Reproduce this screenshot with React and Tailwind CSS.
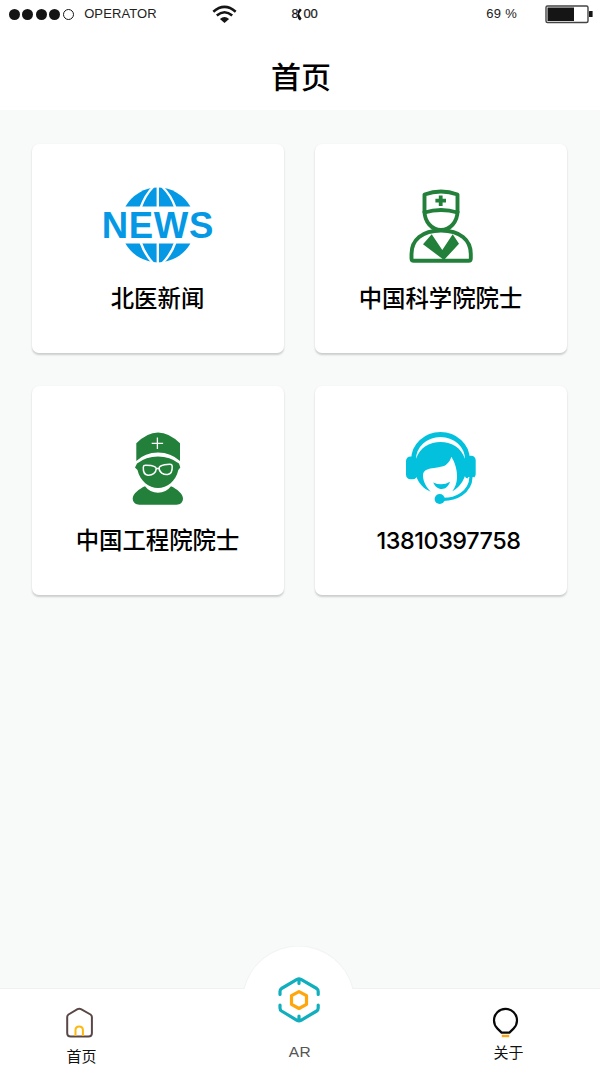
import React from 'react';

const NewsIcon = () => (
  <svg viewBox="98 184 120 80" className="w-[120px] h-20">
    <path d="M125.4 206.5A37.4 37.4 0 0 1 190.4 206.5Z" fill="#0599e5" />
    <path d="M125.4 243.5A37.4 37.4 0 0 0 190.4 243.5Z" fill="#0599e5" />
    <g fill="none" stroke="#fff" strokeWidth="2.4">
      <path d="M157.8 186V208M157.8 242V264" />
      <path d="M153.5 186.5Q145 195 140.5 208M162 186.5Q171 195 175.5 208" />
      <path d="M153.5 263.5Q145 255 140.5 242M162 263.5Q171 255 175.5 242" />
    </g>
    <text
      x="101.8"
      y="238"
      textLength="111.5"
      fontSize="36.5"
      fontWeight="700"
      fill="#0599e5"
      className="font-['Liberation_Sans',sans-serif]"
    >
      NEWS
    </text>
  </svg>
);

const ScientistIcon = () => (
  <svg viewBox="381 184 120 80" className="w-[120px] h-20" fill="none" stroke="#22803a" strokeWidth="3.9" strokeLinejoin="round">
    <path d="M424.5 212.5V194.5Q441 188.5 457.5 194.5V212.5Q441 207.5 424.5 212.5Z" />
    <path d="M424.5 211C424.5 222 432 230 441 230S457.5 222 457.5 211" />
    <path d="M441 230.5C422 230.5 411.5 240 411.5 254V258.5Q411.5 260.8 413.8 260.8H468.5Q470.8 260.8 470.8 258.5V254C470.8 240 460 230.5 441 230.5Z" />
    <path d="M431.7 234.3L423 244.3L444 260L459 243.7L452.7 234.3L442.3 250Z" fill="#22803a" stroke="none" />
    <path d="M440.7 195.5V206M435.4 200.7H446" strokeWidth="3.8" />
  </svg>
);

const EngineerIcon = () => (
  <svg viewBox="98 426 120 80" className="w-[120px] h-20" fill="#22803a">
    <path d="M136.3 443.3Q147 432.4 158 432.4T180 443.3V461Q171 452.4 158 452.4T136.3 461Z" />
    <path d="M137 463.5Q146 456.5 158 456.5T179 463.5L180.3 467.5L178.3 470C176 481 167 488 158 488S140 481 137.5 470L135 467.5Z" />
    <path d="M145 486.3Q150 492.8 158 492.8T171 486.3C177 489 183 494 183 498.5C183 502 180.5 504.7 176.5 504.7H139.5C135.5 504.7 132.7 502 132.7 498.5C132.7 494 139 489 145 486.3Z" />
    <g fill="none" stroke="#fff" strokeWidth="1.5">
      <path d="M157.4 437.6V449M151.7 443.4H163.1" strokeWidth="1.3" />
      <path d="M143.3 467Q143.5 465 146 465.2L151 465.5Q156 466.5 156.2 468.5C156.3 473 152 475.5 148 475.2C144.5 475 143 473 143.3 467Z" />
      <path d="M172.2 466Q172 464 169.5 464.2L164.5 464.7Q159.3 465.8 159.1 468C159 472.5 163.5 474.8 167.5 474.5C171 474.2 172.5 472 172.2 466ZM156 468.8L159.3 468.2" />
    </g>
  </svg>
);

const SupportIcon = () => (
  <svg viewBox="381 426 120 80" className="w-[120px] h-20" fill="#03c1dd">
    <path d="M413.6 461V459.5A26.9 25 0 0 1 467.4 459.5V461" fill="none" stroke="#03c1dd" strokeWidth="4.8" />
    <rect x="406" y="456.5" width="11.3" height="22.8" rx="4.5" />
    <rect x="464.2" y="455.7" width="11.5" height="22.8" rx="4.5" />
    <path d="M416 459C420 447 430 442 440.5 442S461 447 465 459V476C462 484 457 489 452.3 491.3C455 488 456.8 483 457 478C457.5 471 455 462 451.3 456.7C450.5 460 447.5 465 443 466.3C437 468 431 467.8 426.7 469.7C423.5 471.2 423 473.5 423 476C423.3 482 426.5 487.5 430.7 491.7C424 489 419 484 416 476Z" />
    <path d="M433.3 482.5Q442 486.5 450 481.8C448.5 486.5 445.5 489 441.7 489C438 489 435 486.7 433.3 482.5Z" />
    {/* Microphone boom */}
    <path d="M440 499.2C456 500.5 470.5 492 471 477" fill="none" stroke="#fff" strokeWidth="6" />
    <path d="M440 499.2C456 500.5 470.5 492 471 477" fill="none" stroke="#03c1dd" strokeWidth="3.2" />
    <circle cx="439.7" cy="499" r="5.1" />
  </svg>
);

const cards = [
  { label: '北医新闻', icon: NewsIcon },
  { label: '中国科学院院士', icon: ScientistIcon },
  { label: '中国工程院院士', icon: EngineerIcon },
  { label: '13810397758', icon: SupportIcon, phone: true }
];

const StatusBar = () => (
  <div className="flex h-7 items-center pl-[9px] pr-[7px] font-['Liberation_Sans',sans-serif] text-[13px] text-[#222]">
    <div className="flex gap-[2.4px]">
      {[0, 1, 2, 3].map(i => (
        <span key={i} className="size-[11px] rounded-full bg-[#151515]" />
      ))}
      <span className="size-[11px] rounded-full border border-[#151515]" />
    </div>
    <span className="ml-[10.6px] w-[72px] tracking-[0.1px] whitespace-nowrap">OPERATOR</span>
    <svg viewBox="212 4 25 19" className="ml-[55.4px] h-[19px] w-[25px]" fill="none" stroke="#151515" strokeWidth="2.6">
      <path d="M213.3 10.7Q224.5 1.1 235.7 10.7M216.8 14.5Q224.5 8 232.2 14.5" />
      <path d="M219.9 18Q224.5 14 229.1 18L224.5 22Z" fill="#151515" stroke="none" />
    </svg>
    <div className="ml-[55px] flex items-center text-[#151515]">
      <span className="text-[12.5px] [-webkit-text-stroke:0.2px_#151515]">8</span>
      <svg viewBox="0 0 5 14" className="-ml-[2px] h-[14px] w-[5px]" fill="#151515">
        <path d="M1 4L2.8 1.5L4.8 3L3.3 5L2 7L3.3 9.5L4.6 11.5L3 13.5L1.2 12L.8 9Z" />
      </svg>
      <span className="ml-[2px] text-[13px] tracking-[-0.2px] [-webkit-text-stroke:0.2px_#151515]">00</span>
    </div>
    <span className="ml-auto mr-[28px] text-[13px] tracking-[0.3px]">69 %</span>
    <svg viewBox="545 4 48 20" className="h-5 w-12">
      <rect x="546" y="6" width="42" height="16.5" rx="1.5" fill="#fff" stroke="#444" strokeWidth="1.4" />
      <rect x="547.5" y="7.5" width="26.5" height="13.5" fill="#151515" />
      <rect x="589" y="11" width="3.6" height="6" rx=".5" fill="#151515" />
    </svg>
  </div>
);

const TabBar = () => (
  <nav className="relative h-[79px] border-t border-[#f0f2f2] bg-white text-[15px] leading-5 text-[#111]">
    {/* Raised dome behind the AR tab */}
    <svg viewBox="240 945 118 60" className="absolute left-[240px] -top-[43px] h-[60px] w-[118px]">
      <path d="M244 989A56 56 0 0 1 353 989V1004H244Z" fill="#fff" />
      <path d="M244 988A56 56 0 0 1 353 988" fill="none" stroke="#f2f4f4" />
    </svg>

    <div className="relative grid grid-cols-[163px_272px_1fr]">
      <a className="flex flex-col items-center">
        <svg viewBox="64 1004 30 36" className="mt-[15px] mr-[5px] h-9 w-[30px]" fill="none" strokeWidth="2" strokeLinejoin="round">
          <path d="M67.2 1017Q67.2 1015.5 68.5 1014.5L77.5 1009.2Q79.3 1008.2 81 1009.2L90.5 1014.5Q91.9 1015.5 91.9 1017V1033Q91.9 1036.5 88.4 1036.5H70.7Q67.2 1036.5 67.2 1033Z" stroke="#594745" />
          <path d="M75.5 1036V1030Q75.5 1026.4 79.2 1026.4T82.9 1030V1036" stroke="#fcb813" />
        </svg>
        <span className="mt-[6px]">首页</span>
      </a>

      <a className="flex flex-col items-center">
        <svg viewBox="276 974 46 52" className="-mt-[15px] h-[52px] w-[46px]" fill="none" strokeWidth="3.2" strokeLinecap="round" strokeLinejoin="round">
          <g stroke="#11afbd">
            <path d="M280 994.5V991.5Q280 989.5 281.5 988.5L297 979.3Q299 978.2 301 979.3L316.7 988.5Q318.2 989.5 318.2 991.5V994.5M299 979.5V983.5" />
            <path d="M280 1005V1008Q280 1010 281.5 1011L297 1020.3Q299 1021.4 301 1020.3L316.7 1011Q318.2 1010 318.2 1008V1005M299 1020V1016" />
          </g>
          <path d="M299 991.7L306.5 995.7V1004.3L299 1008.5L291.5 1004.3V995.7Z" stroke="#ffa60c" />
        </svg>
        <span className="mt-[16px] pl-[2px] font-['Liberation_Sans',sans-serif] text-[15.5px] leading-5 tracking-[0.6px] text-[#555]">AR</span>
      </a>

      <a className="flex flex-col items-center pr-[18px]">
        <svg viewBox="490 1004 32 34" className="mt-[15px] mr-[5px] h-[34px] w-8" fill="none">
          <path d="M501.6 1032.6L497.5 1028.6A11.5 11.5 0 1 1 513.5 1028.6L509.4 1032.6Z" stroke="#080808" strokeWidth="2.2" strokeLinejoin="round" />
          <path d="M501.8 1036H509.2" stroke="#ffa60c" strokeWidth="2.4" />
        </svg>
        <span className="mt-[4px]">关于</span>
      </a>
    </div>
  </nav>
);

const App = () => {
  return (
    <div className="flex h-[1067px] w-[600px] flex-col overflow-hidden bg-[#f8faf9] font-['Noto_Sans_CJK_SC',sans-serif] text-black">
      <header className="h-[110px] bg-white">
        <StatusBar />
        <h1 className="mt-[27px] pl-[2px] text-center text-[30px] leading-10 font-medium">首页</h1>
      </header>

      <main className="grid flex-1 grid-cols-[252px_252px] content-start gap-x-[31px] gap-y-[33px] pt-[34px] pl-8">
        {cards.map(({ label, icon: Icon, phone }) => (
          <section
            key={label}
            className="flex h-[209px] flex-col items-center rounded-[7px] bg-white pt-10 shadow-[0_1.5px_2px_rgba(0,0,0,0.18)]"
          >
            <Icon />
            {phone ? (
              <p className="mt-5 pl-[15px] font-['Inter',sans-serif] text-[23.4px] leading-[30px] tracking-[-0.45px] font-medium">{label}</p>
            ) : (
              <p className="mt-[18px] pr-px text-[23.4px] leading-[30px] font-medium">{label}</p>
            )}
          </section>
        ))}
      </main>

      <TabBar />
    </div>
  );
};

export default App;
